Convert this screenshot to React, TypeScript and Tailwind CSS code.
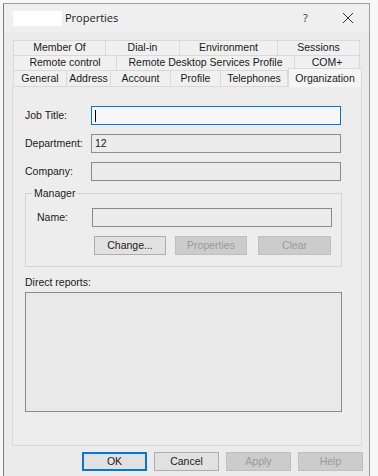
import React from "react";

const row1 = [
  { label: "Member Of", w: 92 },
  { label: "Dial-in", w: 74 },
  { label: "Environment", w: 98 },
  { label: "Sessions", w: 82 },
];
const row2 = [
  { label: "Remote control", w: 103 },
  { label: "Remote Desktop Services Profile", w: 178 },
  { label: "COM+", w: 65 },
];
const row3 = [
  { label: "General", w: 53 },
  { label: "Address", w: 44 },
  { label: "Account", w: 60 },
  { label: "Profile", w: 50 },
  { label: "Telephones", w: 67 },
];

function Tab({ label, w }: { label: string; w: number }) {
  return (
    <div
      style={{ width: w }}
      className="h-full flex items-center justify-center border-t border-r border-[#d9d9d9] bg-[#f0f0f0] text-[10.5px] text-[#1a1a1a]"
    >
      {label}
    </div>
  );
}

function Field({ label, focused, value }: { label: string; focused?: boolean; value?: string }) {
  return (
    <div className="flex items-center h-[19px]">
      <div className="w-[66px] text-[10.5px] text-[#1a1a1a]">{label}</div>
      <div
        className={`w-[250px] h-[19px] flex items-center px-[3px] text-[10.5px] text-[#1a1a1a] border ${
          focused ? "border-[#0078d7] bg-[#f7f7f7]" : "border-[#8a8a8a] bg-[#ececec]"
        }`}
      >
        {focused ? <span className="w-px h-[12px] bg-black" /> : value}
      </div>
    </div>
  );
}

function Btn({ label, disabled, w, primary }: { label: string; disabled?: boolean; w: number; primary?: boolean }) {
  return (
    <div
      style={{ width: w }}
      className={`h-[19px] flex items-center justify-center text-[10.5px] border ${
        primary
          ? "border-[#0078d7] bg-[#e1e1e1] text-[#1a1a1a] shadow-[inset_0_0_0_1px_#0078d7]"
          : disabled
          ? "border-[#bfbfbf] bg-[#cccccc] text-[#9a9a9a]"
          : "border-[#adadad] bg-[#e1e1e1] text-[#1a1a1a]"
      }`}
    >
      {label}
    </div>
  );
}

export default function App() {
  return (
    <div
      className="w-[378px] h-[476px] bg-[#f7f7f7] pt-[3px] pl-[3px] overflow-hidden"
      style={{ fontFamily: '"Liberation Sans", Arial, sans-serif' }}
    >
      <div className="w-[367px] h-[480px] border border-[#9c9c9c] border-l-[#7a7a7a] bg-[#ebebeb] flex flex-col">
        {/* title bar */}
        <div className="h-[28px] bg-[#efefef] flex items-center pl-[9px] pr-[15px]">
          <div className="w-[49px] h-[15px] bg-white" />
          <div className="ml-[3px] text-[11px] text-[#1a1a1a]" style={{ fontFamily: '"Open Sans", sans-serif' }}>
            Properties
          </div>
          <div className="ml-auto w-[10px] text-[11px] text-[#333]" style={{ fontFamily: '"Open Sans", sans-serif' }}>
            ?
          </div>
          <svg width="12" height="12" viewBox="0 0 12 12" className="ml-[29px]">
            <path d="M1 1 L11 11 M11 1 L1 11" stroke="#333" strokeWidth="1" />
          </svg>
        </div>

        {/* tabs */}
        <div className="mt-[8px] pl-[9px] flex flex-col">
          <div className="flex h-[15px] border-l border-[#d9d9d9]">
            {row1.map((t) => (
              <Tab key={t.label} {...t} />
            ))}
          </div>
          <div className="flex h-[15px] border-l border-[#d9d9d9]">
            {row2.map((t) => (
              <Tab key={t.label} {...t} />
            ))}
          </div>
          <div className="flex h-[16px] items-end">
            <div className="flex h-[16px] border-l border-[#d9d9d9]">
              {row3.map((t) => (
                <Tab key={t.label} {...t} />
              ))}
            </div>
            <div className="relative w-[74px] h-[19px] -mb-px border border-b-0 border-[#d9d9d9] bg-[#f5f5f5] flex items-start justify-center pt-[2px] text-[10.5px] text-[#1a1a1a] z-10">
              Organization
            </div>
          </div>
        </div>

        {/* panel */}
        <div className="ml-[8px] w-[350px] h-[360px] border border-[#d9d9d9] bg-[#ededed] pl-[12px] pt-[19px]">
          <div className="flex flex-col gap-[9px]">
            <Field label="Job Title:" focused />
            <Field label="Department:" value="12" />
            <Field label="Company:" />
          </div>

          <div className="relative mt-[12px] w-[317px] h-[74px] border border-[#d4d4d4] pl-[11px] pt-[14px]">
            <div className="absolute -top-[8px] left-[6px] px-[2px] bg-[#ededed] text-[10.5px] text-[#1a1a1a]">Manager</div>
            <div className="flex items-center h-[19px]">
              <div className="w-[55px] text-[10.5px] text-[#1a1a1a]">Name:</div>
              <div className="w-[240px] h-[19px] border border-[#8a8a8a] bg-[#ececec]" />
            </div>
            <div className="flex mt-[9px] ml-[57px] gap-[9px]">
              <Btn label="Change..." w={72} />
              <Btn label="Properties" w={72} disabled />
              <div className="ml-[2px]">
                <Btn label="Clear" w={73} disabled />
              </div>
            </div>
          </div>

          <div className="mt-[9px] text-[10.5px] text-[#1a1a1a] leading-[13px]">Direct reports:</div>
          <div className="mt-[3px] w-[317px] h-[120px] border border-[#8a8a8a] bg-[#e9e9e9]" />
        </div>

        {/* bottom buttons */}
        <div className="mt-[6px] flex justify-end gap-[7px] pr-[6px]">
          <Btn label="OK" w={65} primary />
          <Btn label="Cancel" w={65} />
          <Btn label="Apply" w={65} disabled />
          <Btn label="Help" w={65} disabled />
        </div>
      </div>
    </div>
  );
}
